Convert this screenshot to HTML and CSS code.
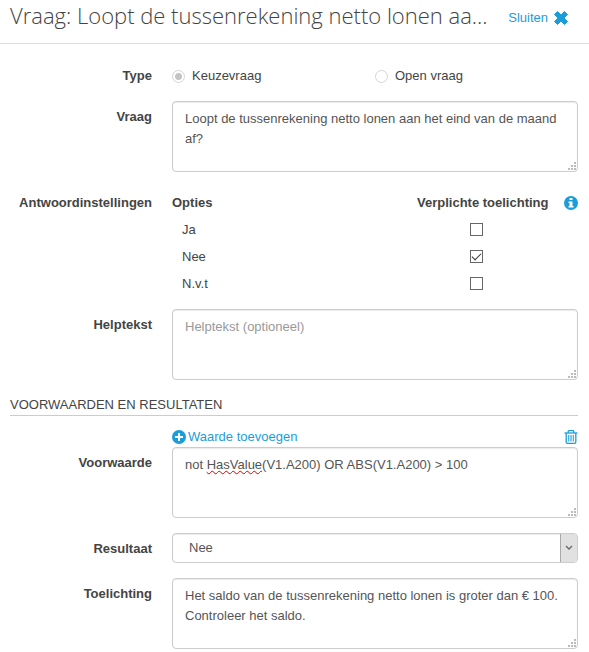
FILE: index.html
```html
<!DOCTYPE html>
<html lang="nl">
<head>
    <meta charset="UTF-8">
    <meta name="viewport" content="width=device-width, initial-scale=1.0">
    <title>Vraag</title>
    <link rel="stylesheet" href="styles.css">
</head>
<body>
    <svg class="defs" width="0" height="0">
        <symbol id="grip" viewBox="0 0 8 8">
            <path d="M6 0h2v2H6zM3 3h2v2H3zM6 3h2v2H6zM0 6h2v2H0zM3 6h2v2H3zM6 6h2v2H6z"/>
        </symbol>
    </svg>

    <header class="header">
        <h1 class="title">Vraag: Loopt de tussenrekening netto lonen aa...</h1>
        <a class="close" href="#">Sluiten
            <svg width="14" height="14" viewBox="0 0 14 14"><path d="M3.5 0.5L7 4L10.500 0.500L13.500 3.500L10 7L13.500 10.500L10.500 13.500L7 10L3.500 13.500L0.500 10.500L4 7L0.500 3.500Z" fill="currentColor" stroke="currentColor" stroke-linejoin="round"/></svg>
        </a>
    </header>

    <form class="form">
        <div class="group" role="radiogroup" aria-labelledby="type-label">
            <span class="label label-type" id="type-label">Type</span>
            <div class="radios">
                <label class="radio"><input type="radio" name="type" checked>Keuzevraag</label>
                <label class="radio"><input type="radio" name="type">Open vraag</label>
            </div>
        </div>

        <div class="group">
            <label class="label" for="vraag">Vraag</label>
            <div class="field">
                <textarea id="vraag">Loopt de tussenrekening netto lonen aan het eind van de maand af?</textarea>
                <svg class="grip"><use href="#grip"/></svg>
            </div>
        </div>

        <div class="group">
            <span class="label">Antwoordinstellingen</span>
            <table class="options">
                <thead>
                    <tr>
                        <th>Opties</th>
                        <th class="required">
                            <div class="required-head">Verplichte toelichting
                                <svg width="14" height="14" viewBox="0 0 14 14"><circle cx="7" cy="7" r="7" fill="currentColor"/><path d="M5.500 2h3v2h-3zM4.500 5.500h4V10h1v1.500h-5V10h1V7h-1z" fill="#fff"/></svg>
                            </div>
                        </th>
                    </tr>
                </thead>
                <tbody>
                    <tr>
                        <td><label for="opt-ja">Ja</label></td>
                        <td class="required"><input type="checkbox" id="opt-ja"></td>
                    </tr>
                    <tr>
                        <td><label for="opt-nee">Nee</label></td>
                        <td class="required"><input type="checkbox" id="opt-nee" checked></td>
                    </tr>
                    <tr>
                        <td><label for="opt-nvt">N.v.t</label></td>
                        <td class="required"><input type="checkbox" id="opt-nvt"></td>
                    </tr>
                </tbody>
            </table>
        </div>

        <div class="group">
            <label class="label" for="helptekst">Helptekst</label>
            <div class="field">
                <textarea id="helptekst" placeholder="Helptekst (optioneel)"></textarea>
                <svg class="grip"><use href="#grip"/></svg>
            </div>
        </div>

        <h2 class="section">VOORWAARDEN EN RESULTATEN</h2>

        <div class="group">
            <div class="toolbar">
                <a class="add" href="#">
                    <svg width="14" height="14" viewBox="0 0 14 14"><circle cx="7" cy="7" r="7" fill="currentColor"/><path d="M6 3h2v3h3v2H8v3H6V8H3V6h3z" fill="#fff"/></svg>
                    Waarde toevoegen
                </a>
                <button class="delete" type="button" aria-label="Verwijderen">
                    <svg width="14" height="14" viewBox="0 0 14 14" fill="none" stroke="currentColor"><path d="M0.500 3h13" stroke-width="1.300"/><path d="M4.200 3V1.500q0-0.800 0.800-0.800h4q0.800 0 0.800 0.800V3M2.200 3v9q0 1.300 1.300 1.300h7q1.300 0 1.300-1.300V3" stroke-width="1.300"/><path d="M4.500 5v6.500M6.200 5v6.500M7.800 5v6.500M9.500 5v6.500" stroke-width="0.800"/></svg>
                </button>
            </div>
            <label class="label" for="voorwaarde">Voorwaarde</label>
            <div class="field">
                <textarea id="voorwaarde" spellcheck="false">not HasValue(V1.A200) OR ABS(V1.A200) &gt; 100</textarea>
                <div class="spelling" aria-hidden="true">not <span class="misspelled">HasValue</span></div>
                <svg class="grip"><use href="#grip"/></svg>
            </div>
        </div>

        <div class="group">
            <label class="label" for="resultaat">Resultaat</label>
            <div class="field">
                <select id="resultaat">
                    <option>Ja</option>
                    <option selected>Nee</option>
                    <option>N.v.t</option>
                </select>
                <span class="arrow">
                    <svg width="8" height="6" viewBox="0 0 8 6"><path d="M1 1l3 3 3-3" fill="none" stroke="#666" stroke-width="1.300"/></svg>
                </span>
            </div>
        </div>

        <div class="group">
            <label class="label" for="toelichting">Toelichting</label>
            <div class="field">
                <textarea id="toelichting">Het saldo van de tussenrekening netto lonen is groter dan € 100. Controleer het saldo.</textarea>
                <svg class="grip"><use href="#grip"/></svg>
            </div>
        </div>
    </form>
</body>
</html>
```
FILE: styles.css
```css
* {
    box-sizing: border-box;
}
body {
    margin: 0;
    background-color: #fff;
    color: #444;
    font-family: "Liberation Sans", Arial, sans-serif;
    font-size: 13px;
    line-height: 20px;
}
.defs {
    position: absolute;
}
a {
    color: #1b9dd9;
    text-decoration: none;
}
.header {
    display: flex;
    align-items: flex-start;
    justify-content: space-between;
    gap: 10px;
    height: 44px;
    padding: 0 21px 0 10px;
    border-bottom: 1px solid #ddd;
}
.title {
    margin: 0;
    white-space: nowrap;
    font-family: "Open Sans", sans-serif;
    font-size: 22px;
    font-weight: 300;
    line-height: 30px;
}
.close {
    display: flex;
    align-items: center;
    gap: 6px;
    padding-top: 8px;
}
.form {
    padding: 22px 11px 0 10px;
}
.group {
    display: grid;
    grid-template-columns: 142px 1fr;
    column-gap: 20px;
    margin-bottom: 15px;
}
.label {
    padding-top: 6px;
    text-align: right;
    font-weight: bold;
}
.label-type {
    padding-top: 0;
}
.radios {
    display: grid;
    grid-template-columns: 1fr 1fr;
}
.radio {
    display: flex;
    align-items: center;
    gap: 7px;
}
input[type="radio"] {
    appearance: none;
    width: 13px;
    height: 13px;
    margin: 0;
    border: 1px solid #d5d5d5;
    border-radius: 50%;
    background-color: #fff;
}
input[type="radio"]:checked {
    background-image: radial-gradient(circle, #c4c4c4 3px, transparent 4px);
}
.field {
    position: relative;
    display: flex;
}
textarea,
select {
    width: 100%;
    margin: 0;
    border: 1px solid #ccc;
    border-radius: 4px;
    background-color: #fff;
    color: #555;
    font: inherit;
    box-shadow: inset 0 1px 1px rgba(0, 0, 0, 0.08);
}
textarea {
    height: 71px;
    padding: 7px 12px;
    resize: none;
}
textarea::placeholder {
    color: #999;
}
.grip {
    position: absolute;
    right: 2px;
    bottom: 2px;
    width: 8px;
    height: 8px;
    fill: #bbb;
    pointer-events: none;
}
.spelling {
    position: absolute;
    top: 8px;
    left: 13px;
    color: transparent;
    pointer-events: none;
}
.misspelled {
    text-decoration: underline wavy #e00000 1px;
}
select {
    height: 30px;
    padding: 0 30px 0 16px;
    appearance: none;
}
.arrow {
    position: absolute;
    top: 1px;
    right: 1px;
    bottom: 1px;
    display: flex;
    align-items: center;
    justify-content: center;
    width: 17px;
    border-left: 1px solid #aaa;
    border-radius: 0 3px 3px 0;
    background-color: #e1e1e1;
    pointer-events: none;
}
.options {
    width: 100%;
    margin-top: 6px;
    border-collapse: collapse;
}
.options th {
    padding: 0;
    text-align: left;
}
.options td {
    height: 27px;
    padding: 7px 10px 0;
}
.options .required {
    width: 161px;
}
.options td.required {
    padding: 5px 0 0 53px;
}
.required-head {
    display: flex;
    align-items: center;
    justify-content: space-between;
}
.required-head svg {
    color: #1b9dd9;
}
input[type="checkbox"] {
    appearance: none;
    display: block;
    width: 13px;
    height: 13px;
    margin: 0;
    border: 1px solid #666;
    background-color: #fff;
}
input[type="checkbox"]:checked::before {
    content: "";
    display: block;
    width: 8px;
    height: 4px;
    margin: 2px 1px;
    border-left: 1px solid #333;
    border-bottom: 1px solid #333;
    transform: rotate(-45deg);
}
.section {
    margin: 0 0 11px;
    border-bottom: 1px solid #ccc;
    font-size: 13px;
    font-weight: normal;
    line-height: 20px;
}
.toolbar {
    grid-column: 2;
    display: flex;
    align-items: center;
    justify-content: space-between;
}
.add {
    display: flex;
    align-items: center;
    gap: 2px;
}
.delete {
    display: flex;
    padding: 0;
    border: 0;
    background: none;
    color: #1b9dd9;
    cursor: pointer;
}
```
